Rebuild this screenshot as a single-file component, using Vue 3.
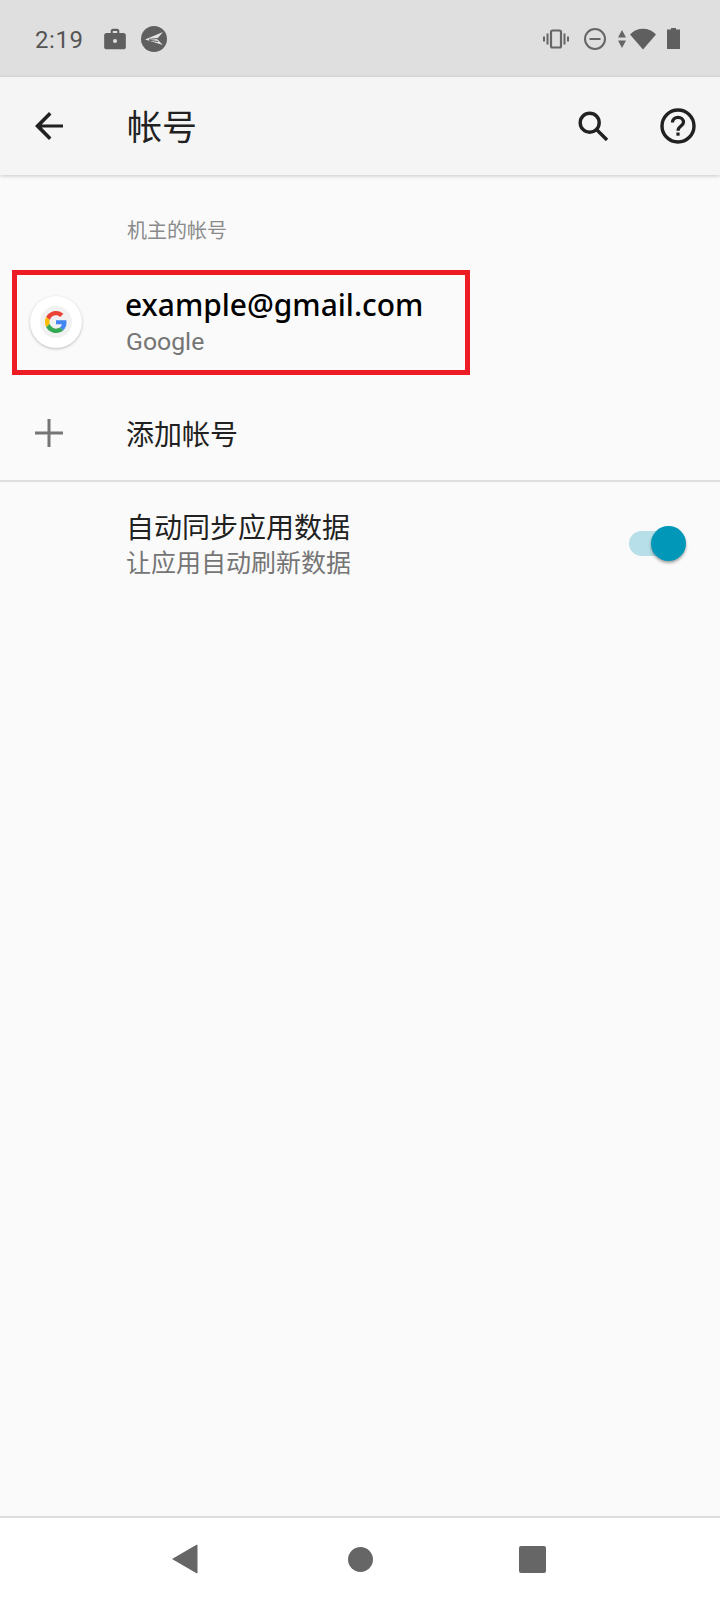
<template>
  <div class="screen">
    <div class="status-bar">
      <span class="time">2:19</span>
      <svg class="ic-work" viewBox="0 0 24 24" width="26" height="26"><path d="M20 6.500h-4V4.600c0-1.100-.9-2-2-2h-4c-1.100 0-2 .9-2 2v1.900H4c-1.100 0-2 .9-2 2v11c0 1.100.9 2 2 2h16c1.100 0 2-.9 2-2v-11c0-1.100-.9-2-2-2zM10 4.600h4v1.900h-4V4.600zm2 11.200a1.900 1.900 0 1 1 0-3.800 1.900 1.900 0 0 1 0 3.800z" fill="#5f5f5f"/></svg>
      <svg class="ic-send" viewBox="0 0 26 26" width="26" height="26">
        <circle cx="13" cy="13" r="13" fill="#5f5f5f"/>
        <path d="M4 13.500 22 6l-6 7 6 6z" fill="#e4e4e4"/>
        <path d="M8 13.300 17 12.500M8 14.200 17 15.500" stroke="#5f5f5f" stroke-width="1"/>
      </svg>
      <div class="spacer"></div>
      <svg viewBox="0 0 26 20" width="26" height="20" class="ic-vib">
        <rect x="8" y="1.500" width="10" height="17" rx="1.500" fill="none" stroke="#666" stroke-width="2.200"/>
        <path d="M4.500 4.500v11M1 7.500v5M21.500 4.500v11M25 7.500v5" stroke="#666" stroke-width="2" fill="none"/>
      </svg>
      <svg viewBox="0 0 24 24" width="24" height="24" class="ic-dnd">
        <circle cx="12" cy="12" r="10" fill="none" stroke="#666" stroke-width="2"/>
        <rect x="6.500" y="11" width="11" height="2" fill="#666"/>
      </svg>
      <svg viewBox="0 0 10 18" width="10" height="18" class="ic-updown"><path d="M5 0l4 7.500H1zM5 18l-4-7.500h8z" fill="#666"/></svg>
      <svg viewBox="0 0 26 22" width="26" height="22" class="ic-wifi"><path d="M13 21.500 0 6.500C3.500 2.800 8 .8 13 .8s9.500 2 13 5.700z" fill="#5f5f5f"/></svg>
      <svg viewBox="0 0 13 21" width="13" height="21" class="ic-batt"><path d="M4 0h5v1.500h4V21H0V1.500h4z" fill="#5f5f5f"/></svg>
    </div>

    <div class="toolbar">
      <svg class="back" viewBox="4 4 16 16" width="28" height="28"><path d="M20 11.100H7.830l5.590-5.690L12 4l-8 8 8 8 1.410-1.410-5.580-5.690H20z" fill="#212121"/></svg>
      <span class="title">帐号</span>
      <div class="spacer"></div>
      <svg class="search" viewBox="0 0 30 30" width="30" height="30">
        <circle cx="11.700" cy="11.700" r="9.500" fill="none" stroke="#212121" stroke-width="3.400"/>
        <path d="M18.500 18.500 29 29" stroke="#212121" stroke-width="3.400" fill="none"/>
      </svg>
      <svg class="help" viewBox="0 0 36 36" width="36" height="36">
        <circle cx="18" cy="18" r="16" fill="none" stroke="#212121" stroke-width="3.400"/>
        <path d="M12.500 14.500c0-3 2.500-5.200 5.500-5.200s5.500 2.100 5.500 5c0 3.800-5.500 3.700-5.500 8.400" fill="none" stroke="#212121" stroke-width="3.200"/>
        <rect x="16.400" y="24.500" width="3.200" height="3.200" fill="#212121"/>
      </svg>
    </div>

    <main class="content">
      <div class="section-label">机主的帐号</div>

      <div class="account-row">
        <div class="avatar">
          <div class="avatar-inner">
            <svg viewBox="0 0 48 48" width="22" height="22">
              <path fill="#ea4335" d="M24 9.500c3.500 0 6.700 1.200 9.200 3.600l6.900-6.900C35.900 2.400 30.500 0 24 0 14.600 0 6.500 5.400 2.600 13.200l8 6.200C12.400 13.700 17.700 9.500 24 9.500z"/>
              <path fill="#4285f4" d="M46.900 24.500c0-1.600-.1-3.100-.4-4.500H24v9h12.900c-.6 3-2.200 5.500-4.700 7.200l7.700 6c4.500-4.200 7-10.300 7-17.700z"/>
              <path fill="#fbbc05" d="M10.500 28.600a14.500 14.500 0 0 1 0-9.200l-8-6.200a24 24 0 0 0 0 21.600z"/>
              <path fill="#34a853" d="M24 48c6.500 0 11.900-2.100 15.900-5.800l-7.700-6c-2.200 1.500-5 2.300-8.200 2.300-6.300 0-11.600-4.200-13.500-9.900l-8 6.200C6.500 42.600 14.600 48 24 48z"/>
            </svg>
          </div>
        </div>
        <div class="row-text">
          <div class="email">example@gmail.com</div>
          <div class="sub">Google</div>
        </div>
      </div>

      <div class="add-row">
        <svg class="plus" viewBox="0 0 28 28" width="28" height="28"><path d="M0 12.500h28v3H0zM12.500 0h3v28h-3z" fill="#757575"/></svg>
        <span class="add-label">添加帐号</span>
      </div>

      <div class="divider"></div>

      <div class="sync-row">
        <div class="row-text">
          <div class="sync-title">自动同步应用数据</div>
          <div class="sync-sub">让应用自动刷新数据</div>
        </div>
        <div class="switch">
          <div class="track"></div>
          <div class="thumb"></div>
        </div>
      </div>

      <div class="highlight"></div>
    </main>

    <div class="nav-bar">
      <svg viewBox="0 0 26 30" width="26" height="30"><path d="M0 15 24.500.8q1 -.5 1 .7v27q0 1.200-1 .7z" fill="#666"/></svg>
      <div class="nav-circle"></div>
      <div class="nav-square"></div>
    </div>
  </div>
</template>

<script setup>
</script>

<style>
html, body {
  margin: 0;
  background: #fafafa;
}
</style>

<style scoped>
.screen {
  display: flex;
  flex-direction: column;
  width: 720px;
  height: 1600px;
  overflow: hidden;
  background: #fafafa;
  font-family: Roboto, "Noto Sans CJK SC", sans-serif;
}

.spacer {
  flex: 1;
}

.status-bar {
  display: flex;
  align-items: center;
  box-sizing: border-box;
  height: 77px;
  padding: 0 40px 0 35px;
  background: #dfdfdf;
}

.time {
  margin-top: 2px;
  font-size: 24px;
  color: #555;
  letter-spacing: 0.6px;
}

.ic-work {
  margin-left: 18px;
}

.ic-send {
  margin-left: 13px;
}

.ic-vib {
  margin-right: 14px;
}

.ic-dnd {
  margin-right: 10px;
}

.ic-updown {
  margin-right: 3px;
}

.ic-wifi {
  margin-right: 11px;
}

.toolbar {
  position: relative;
  z-index: 1;
  display: flex;
  align-items: center;
  box-sizing: border-box;
  height: 98px;
  padding: 0 24px 0 35px;
  background: #f5f5f5;
  box-shadow: 0 1px 4px rgba(0, 0, 0, 0.2);
}

.title {
  margin-left: 64px;
  margin-bottom: 4px;
  font-size: 35px;
  color: #212121;
}

.help {
  margin-left: 52px;
}

.content {
  position: relative;
  flex: 1;
}

.section-label {
  height: 53px;
  padding: 44px 0 0 127px;
  margin-bottom: -1px;
  font-size: 20px;
  line-height: 24px;
  color: #8a8a8a;
}

.account-row {
  display: flex;
  align-items: center;
  box-sizing: border-box;
  height: 105px;
  padding-left: 30px;
  padding-bottom: 2px;
}

.avatar {
  display: flex;
  align-items: center;
  justify-content: center;
  width: 52px;
  height: 52px;
  margin-top: -2px;
  border-radius: 50%;
  background: #fff;
  box-shadow: 0 1px 3px rgba(0, 0, 0, 0.25);
}

.avatar-inner {
  display: flex;
  align-items: center;
  justify-content: center;
  width: 32px;
  height: 32px;
  border-radius: 50%;
  background: #f1f1f1;
}

.row-text {
  margin-left: 44px;
}

.email {
  margin-left: -1px;
  font-family: "Noto Sans", sans-serif;
  font-size: 29.900px;
  font-weight: 500;
  line-height: 36px;
  color: #000;
}

.sub {
  margin-top: 2px;
  font-size: 24.800px;
  line-height: 34px;
  color: #757575;
}

.add-row {
  display: flex;
  align-items: center;
  box-sizing: border-box;
  height: 104px;
  padding-top: 10px;
  padding-left: 35px;
}

.add-label {
  margin-left: 63px;
  font-size: 28px;
  color: #212121;
}

.divider {
  height: 2px;
  background: #dfdfe2;
}

.sync-row {
  display: flex;
  align-items: center;
  justify-content: space-between;
  height: 127px;
  padding-left: 82px;
  padding-right: 34px;
}

.sync-title {
  font-size: 28px;
  line-height: 36px;
  color: #212121;
}

.sync-sub {
  font-size: 25px;
  line-height: 34px;
  color: #757575;
}

.switch {
  position: relative;
  width: 57px;
  height: 35px;
  margin-top: -4px;
}

.track {
  position: absolute;
  left: 0;
  top: 5px;
  width: 50px;
  height: 25px;
  border-radius: 12.500px;
  background: #b6dfe9;
}

.thumb {
  position: absolute;
  right: 0;
  top: 0;
  width: 35px;
  height: 35px;
  border-radius: 50%;
  background: #0097b8;
  box-shadow: 0 2px 3px rgba(0, 0, 0, 0.35);
}

.highlight {
  position: absolute;
  left: 12px;
  top: 95px;
  box-sizing: border-box;
  width: 458px;
  height: 105px;
  border: 5px solid #ed1c24;
}

.nav-bar {
  display: flex;
  align-items: center;
  justify-content: space-between;
  box-sizing: border-box;
  height: 84px;
  padding: 0 174px 0 172px;
  border-top: 2px solid #dedede;
  background: #fff;
}

.nav-circle {
  width: 25px;
  height: 25px;
  margin-left: 4px;
  border-radius: 50%;
  background: #666;
}

.nav-square {
  width: 27px;
  height: 27px;
  border-radius: 2px;
  background: #666;
}
</style>
